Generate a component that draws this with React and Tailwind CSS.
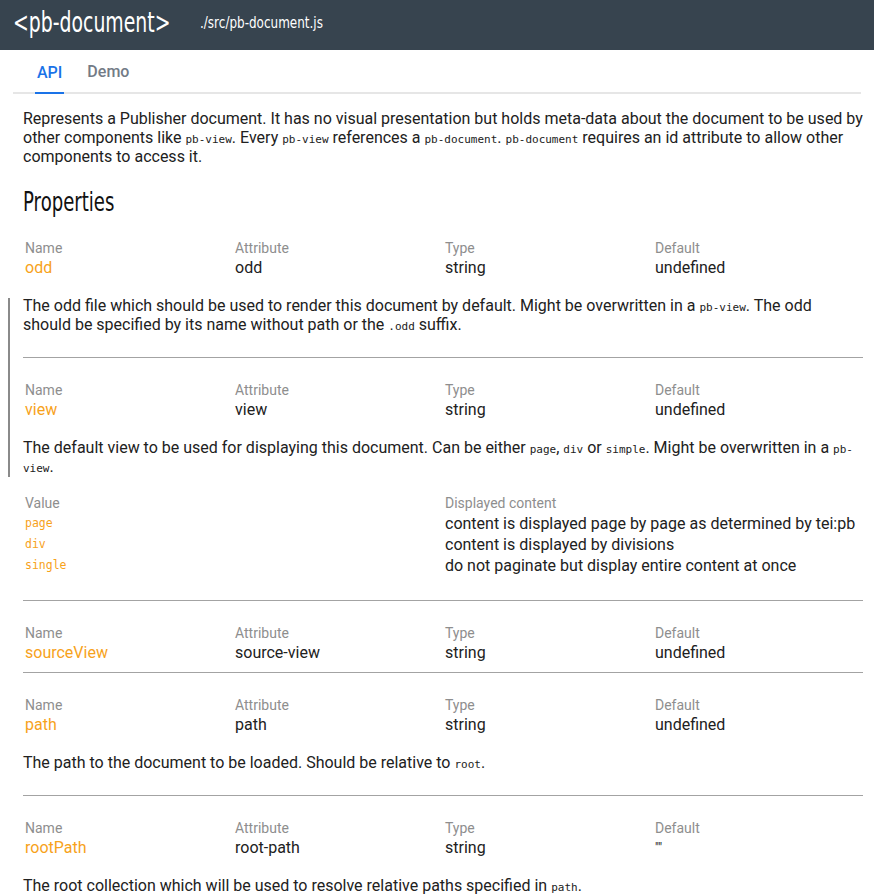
const props = [
  {
    name: 'odd',
    attribute: 'odd',
    type: 'string',
    def: 'undefined',
    desc: (
      <>
        The odd file which should be used to render this document by default. Might be overwritten in a <Code>pb-view</Code>. The odd
        should be specified by its name without path or the <Code>.odd</Code> suffix.
      </>
    ),
  },
  {
    name: 'view',
    attribute: 'view',
    type: 'string',
    def: 'undefined',
    desc: (
      <>
        The default view to be used for displaying this document. Can be either <Code>page</Code>, <Code>div</Code> or <Code>simple</Code>. Might be overwritten in a <Code>pb-view</Code>.
      </>
    ),
    values: [
      ['page', 'content is displayed page by page as determined by tei:pb'],
      ['div', 'content is displayed by divisions'],
      ['single', 'do not paginate but display entire content at once'],
    ],
  },
  { name: 'sourceView', attribute: 'source-view', type: 'string', def: 'undefined' },
  {
    name: 'path',
    attribute: 'path',
    type: 'string',
    def: 'undefined',
    desc: (
      <>
        The path to the document to be loaded. Should be relative to <Code>root</Code>.
      </>
    ),
  },
  {
    name: 'rootPath',
    attribute: 'root-path',
    type: 'string',
    def: '""',
    small: true,
    desc: (
      <>
        The root collection which will be used to resolve relative paths specified in <Code>path</Code>.
      </>
    ),
  },
];

function Code({ children }) {
  return <code className="font-['DejaVu_Sans_Mono',monospace] text-[11px] leading-none">{children}</code>;
}

function Cell({ label, children, accent, small }) {
  return (
    <div className="w-[210px] px-[2px]">
      <div className="text-sm leading-5 text-[#8e8e8e]">{label}</div>
      {small ? (
        <div className="h-5 pt-[3px] text-[12px] leading-[14px] text-[#212121]">{children}</div>
      ) : (
        <div className={`text-base leading-5 ${accent ? 'text-[#f7a21b]' : 'text-[#212121]'}`}>{children}</div>
      )}
    </div>
  );
}

function Property({ p, first }) {
  return (
    <div className={`pb-[9px] ${first ? 'pt-0' : 'pt-[22px] border-t border-[#a3a3a3]'}`}>
      <div className="flex">
        <Cell label="Name" accent>{p.name}</Cell>
        <Cell label="Attribute">{p.attribute}</Cell>
        <Cell label="Type">{p.type}</Cell>
        <Cell label="Default" small={p.small}>{p.def}</Cell>
      </div>
      {p.desc && <p className="mt-[18px] mb-[14px] leading-[19px]">{p.desc}</p>}
      {p.values && (
        <div className="pt-[3px] mb-[15px]">
          <div className="flex text-sm leading-5 text-[#8e8e8e]">
            <div className="w-[420px] px-[2px]">Value</div>
            <div className="px-[2px]">Displayed content</div>
          </div>
          {p.values.map(([v, d]) => (
            <div key={v} className="flex h-[21px] items-center">
              <div className="w-[420px] px-[2px] font-['DejaVu_Sans_Mono',monospace] text-[11.5px] text-[#f7a21b]">{v}</div>
              <div className="px-[2px] text-base">{d}</div>
            </div>
          ))}
        </div>
      )}
    </div>
  );
}

export default function App() {
  return (
    <div className="min-h-[895px] bg-white font-['Roboto',sans-serif] text-[#212121] relative">
      {/* header */}
      <div className="h-[50px] bg-[#37444f] flex items-center px-[13px] text-white font-['DejaVu_Sans',sans-serif]">
        <span className="w-[154px] whitespace-nowrap -mt-[4px]">
          <span className="inline-block origin-left scale-x-[0.65] text-[29px] leading-none">&lt;pb-document&gt;</span>
        </span>
        <span className="w-[140px] ml-[33px] whitespace-nowrap -mt-[4px]">
          <span className="inline-block origin-left scale-x-[0.8] text-[15px]">./src/pb-document.js</span>
        </span>
      </div>

      {/* tabs */}
      <div className="mx-[13px] h-[44px] border-b-2 border-[#e6e6e6] flex items-end pl-[22px]">
        <div className="h-[44px] pt-[4px] flex items-center border-b-2 border-[#1a73e8] -mb-[2px] px-[2px] text-[#1a73e8] font-medium text-base">API</div>
        <div className="h-[44px] pt-[3px] flex items-center ml-[23px] text-[#737b86] font-medium text-base">Demo</div>
      </div>

      <div className="px-[23px] pr-[11px]">
        <p className="mt-[15px] leading-[19px]">
          Represents a Publisher document. It has no visual presentation but holds meta-data about the document to be used by
          other components like <Code>pb-view</Code>. Every <Code>pb-view</Code> references a <Code>pb-document</Code>. <Code>pb-document</Code> requires an id attribute to allow other
          components to access it.
        </p>
        <h2 className="mt-[24px] h-[48px] whitespace-nowrap font-['DejaVu_Sans',sans-serif] text-[#111]">
          <span className="inline-block origin-left scale-x-[0.67] text-[27px] leading-[24px]">Properties</span>
        </h2>
        {props.map((p, i) => (
          <Property key={p.name} p={p} first={i === 0} />
        ))}
      </div>

      {/* selection marker on the left */}
      <div className="absolute left-[8px] top-[298px] h-[179px] w-[2px] bg-[#8a8a8a]" />
    </div>
  );
}
